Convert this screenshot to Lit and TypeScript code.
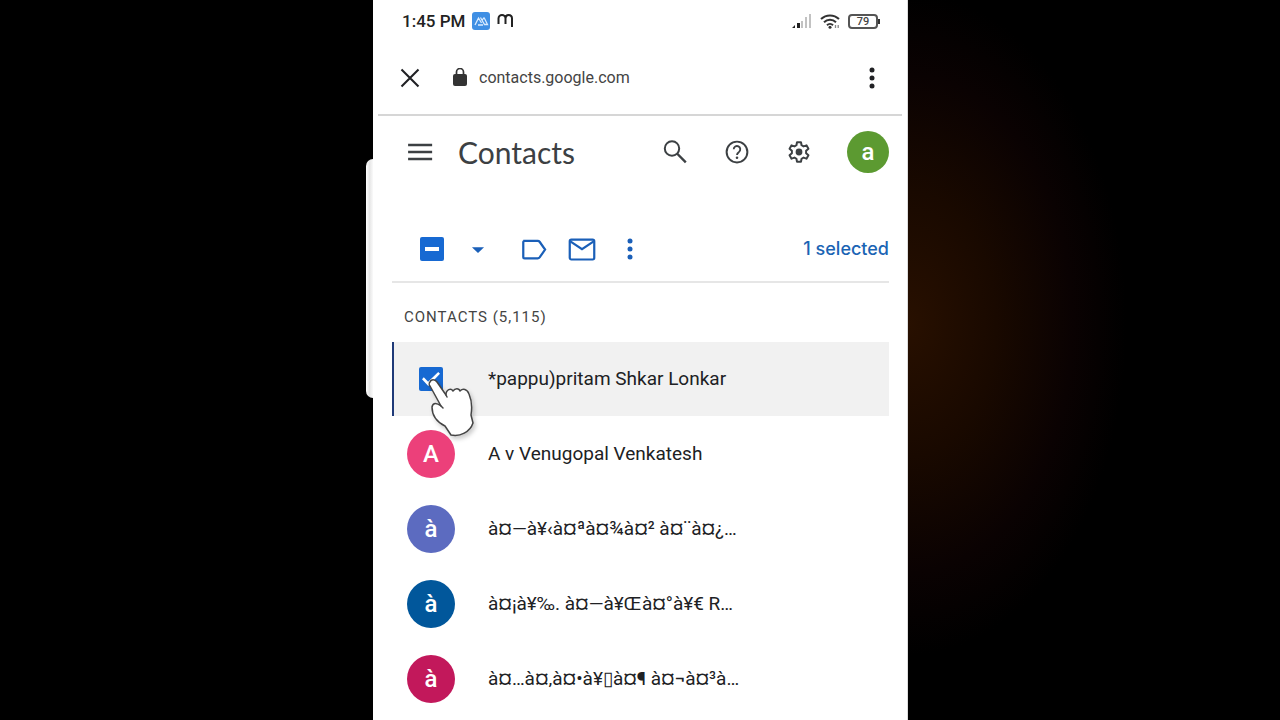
import { LitElement, html, css, svg } from 'lit';
import { customElement, property, state } from 'lit/decorators.js';

interface Contact {
    name: string;
    initial: string;
    tone: string;
    selected: boolean;
}

const CONTACTS: Contact[] = [
    { name: '*pappu)pritam Shkar Lonkar', initial: 'p', tone: 'green', selected: true },
    { name: 'A v Venugopal Venkatesh', initial: 'A', tone: 'pink', selected: false },
    { name: 'à¤—à¥‹à¤ªà¤¾à¤² à¤¨à¤¿…', initial: 'à', tone: 'indigo', selected: false },
    { name: 'à¤¡à¥‰. à¤—à¥Œà¤°à¥€ R…', initial: 'à', tone: 'blue', selected: false },
    { name: 'à¤…à¤‚à¤•à¥▯à¤¶ à¤¬à¤³à…', initial: 'à', tone: 'magenta', selected: false },
];

// 24x24 icons, painted with currentColor
const ICONS = {
    close: svg`<path d="M3.5 3.5l17 17M20.5 3.5l-17 17" fill="none" stroke="currentColor" stroke-width="2.1"/>`,
    menu: svg`<path d="M1.800 6h20.600M1.800 12h20.600M1.800 18h20.600" fill="none" stroke="currentColor" stroke-width="2.200"/>`,
    more: svg`<circle cx="12" cy="4" r="2.500"/><circle cx="12" cy="12" r="2.500"/><circle cx="12" cy="20" r="2.500"/>`,
    search: svg`<circle cx="9" cy="8.500" r="7.200" fill="none" stroke="currentColor" stroke-width="2"/><path d="M14 13.500l8.800 8.800" fill="none" stroke="currentColor" stroke-width="2.400"/>`,
    help: svg`<circle cx="12" cy="12" r="8.900" fill="none" stroke="currentColor" stroke-width="1.700"/><path d="M9.200 9.700a2.800 2.800 0 1 1 4.500 2.200c-1.100.8-1.700 1.300-1.700 2.600" fill="none" stroke="currentColor" stroke-width="1.600"/><circle cx="12" cy="17" r="1.100"/>`,
    gear: svg`<path d="M10.300 2.800h3.400l.5 2.600 1.700 1 2.500-.9 1.700 2.900-2 1.800v2l2 1.800-1.700 2.900-2.500-.9-1.700 1-.5 2.600h-3.400l-.5-2.600-1.700-1-2.500.9-1.700-2.900 2-1.800v-2l-2-1.800 1.700-2.900 2.500.9 1.700-1z" transform="translate(0 .8)" fill="none" stroke="currentColor" stroke-width="1.700" stroke-linejoin="round"/><circle cx="12" cy="12" r="2.900"/>`,
    arrow: svg`<path d="M6.800 10.500h10.400l-5.200 5z"/>`,
    label: svg`<path d="M2.800 5h12.400a2 2 0 0 1 1.600.8l4.700 6.700-4.700 6.700a2 2 0 0 1-1.600.8H4a1.200 1.200 0 0 1-1.200-1.200V6.200A1.200 1.200 0 0 1 4 5z" fill="none" stroke="currentColor" stroke-width="1.900"/>`,
    mail: svg`<rect x="1.500" y="4" width="21" height="17" rx="1.400" fill="none" stroke="currentColor" stroke-width="1.900"/><path d="M2 5.400l10 6.800 10-6.800" fill="none" stroke="currentColor" stroke-width="1.900"/>`,
};

type IconName = keyof typeof ICONS;

@customElement('icon-button')
export class IconButton extends LitElement {
    static styles = css`
    :host {
      display: block;
    }

    button {
      display: grid;
      place-items: center;
      width: 28px;
      height: 28px;
      padding: 0;
      border: 0;
      background: none;
      color: inherit;
      cursor: pointer;
    }

    svg {
      display: block;
      width: 28px;
      height: 28px;
      fill: currentColor;
    }

    .small svg {
      width: 24px;
      height: 24px;
    }
  `;

    @property() icon: IconName = 'more';
    @property() name = '';
    @property() size = '';

    render() {
        return html`
      <button class=${this.size} type="button" aria-label=${this.name}>
        <svg viewBox="0 0 24 24" aria-hidden="true">${ICONS[this.icon]}</svg>
      </button>
    `;
    }
}

@customElement('status-bar')
export class StatusBar extends LitElement {
    static styles = css`
    :host {
      display: flex;
      align-items: center;
      gap: 7px;
      height: 42px;
      padding: 0 27px 0 29px;
      color: #222;
    }

    .time {
      font-size: 17px;
      font-weight: 500;
      line-height: 20px;
    }

    .tray {
      display: flex;
      align-items: center;
      gap: 8px;
      margin-left: auto;
    }

    .power {
      display: flex;
      align-items: center;
    }

    .battery {
      box-sizing: border-box;
      width: 30px;
      height: 15px;
      border: 2px solid #555;
      border-radius: 4px;
      color: #444;
      font-size: 11px;
      font-weight: 500;
      line-height: 11px;
      text-align: center;
    }

    .tip {
      width: 2px;
      height: 5px;
      background: #333;
    }

    svg {
      display: block;
    }
  `;

    render() {
        return html`
      <span class="time">1:45 PM</span>
      <svg width="18" height="18" viewBox="0 0 18 18" aria-hidden="true">
        <rect width="18" height="18" rx="3" fill="#3f8fe4"/>
        <path d="M3 13l3.500-7 3 5M6 13h5M8.500 5.500l4 7h3l-3.500-7M12 5.500l-2 3" fill="none" stroke="#d9ebff" stroke-width="1.300"/>
      </svg>
      <svg width="17" height="18" viewBox="0 0 17 18" aria-hidden="true">
        <path d="M1.500 12V6.500a3.500 3.500 0 0 1 7 0V12M8.500 6.500C8.500 4 9.800 3 11.500 3S15 4 15 6.500V15" fill="none" stroke="#222" stroke-width="2"/>
      </svg>
      <span class="tray">
        <svg width="20" height="15" viewBox="0 0 20 15" aria-hidden="true">
          <path d="M0 14l3-3v3zM5 9h3v5H5z" fill="#222"/>
          <path d="M9 7h2v7H9zM13 3h2v11h-2zM17 0h2v14h-2z" fill="#c2c2c2"/>
        </svg>
        <svg width="20" height="16" viewBox="0 0 20 16" aria-hidden="true">
          <path d="M1 6a13 13 0 0 1 18 0M4 9.200a8.600 8.600 0 0 1 12 0M7 12.200a4.300 4.300 0 0 1 6 0" fill="none" stroke="#333" stroke-width="2"/>
          <circle cx="10" cy="14.200" r="1.500" fill="#333"/>
          <path d="M15.500 12v3M18.200 12v3" stroke="#888" stroke-width="1.300"/>
        </svg>
        <span class="power">
          <span class="battery">79</span>
          <span class="tip"></span>
        </span>
      </span>
    `;
    }
}

@customElement('app-root')
export class AppRoot extends LitElement {
    static styles = css`
    :host {
      display: block;
      font-family: Roboto, 'Noto Sans', sans-serif;
      color: #202124;
    }

    * {
      box-sizing: border-box;
    }

    .stage {
      display: flex;
      justify-content: center;
      height: 100vh;
      padding-left: 1px;
      overflow: hidden;
      background: radial-gradient(17% 46% at 71% 45%, #281000, #190900 40%, #0a0202 75%, #000) #000;
    }

    .phone {
      position: relative;
      width: 100%;
      max-width: 535px;
      height: 100%;
      border-right: 1px solid #ddd;
      background: #fff;
    }

    /* edge panel handle sticking out of the phone */
    .handle {
      position: absolute;
      top: 159px;
      left: -7px;
      width: 7px;
      height: 239px;
      border-radius: 7px 0 0 7px;
      background: linear-gradient(90deg, #fff, #e6e6e6 50%, #fafafa);
    }

    .address {
      display: flex;
      align-items: center;
      height: 74px;
      margin: 0 5px;
      padding: 0 16px 0 18px;
      border-bottom: 2px solid #d6d6d6;
    }

    .lock {
      margin: 0 11px 0 28px;
    }

    .url {
      flex: 1;
      font-size: 16px;
      line-height: 20px;
      color: #444;
    }

    .content {
      padding: 0 18px 0 19px;
    }

    .header {
      display: flex;
      align-items: center;
      gap: 34px;
      height: 72px;
      padding-left: 14px;
      color: #3c4043;
    }

    .brand {
      display: flex;
      flex: 1;
      align-items: center;
      gap: 24px;
    }

    h1 {
      margin: 0;
      font-family: Lato, sans-serif;
      font-size: 30px;
      font-weight: 400;
      line-height: 36px;
    }

    .account {
      width: 42px;
      height: 42px;
      padding: 0;
      border: 0;
      border-radius: 50%;
      background: #5c9a31;
      color: #fff;
      font-family: inherit;
      font-size: 24px;
      font-weight: 500;
      line-height: 42px;
    }

    .toolbar {
      display: flex;
      align-items: center;
      gap: 20px;
      height: 67px;
      margin-top: 28px;
      padding-left: 28px;
      border-bottom: 2px solid #e6e6e6;
      color: #1a5fb8;
    }

    .dropdown {
      margin-right: 8px;
    }

    .count {
      margin-left: auto;
      font-family: Inter, sans-serif;
      font-size: 18px;
      font-weight: 500;
      line-height: 24px;
      color: #1b64b4;
    }

    input {
      display: grid;
      place-items: center;
      appearance: none;
      width: 24px;
      height: 24px;
      margin: 0;
      border-radius: 2px;
      background: #1769d2;
    }

    input::before {
      content: '';
      width: 18px;
      height: 14px;
      background: #fff;
      clip-path: polygon(0 52%, 10% 38%, 34% 70%, 90% 0, 100% 12%, 35% 100%);
    }

    input:indeterminate::before {
      width: 14px;
      height: 4px;
      clip-path: none;
    }

    h2 {
      margin: 0;
      padding: 25px 12px 16px;
      font-size: 15px;
      font-weight: 400;
      letter-spacing: 1px;
      line-height: 18px;
      color: #444;
    }

    ul {
      display: grid;
      gap: 1px;
      margin: 0;
      padding: 0;
      list-style: none;
    }

    li {
      position: relative;
      display: flex;
      align-items: center;
      gap: 33px;
      height: 74px;
      padding-left: 15px;
    }

    .selected {
      background: #f1f1f1;
      box-shadow: inset 2px 0 #1f3a78;
    }

    .avatar {
      display: grid;
      place-items: center;
      width: 48px;
      height: 48px;
      border-radius: 50%;
      color: #fff;
      font-size: 24px;
      font-weight: 500;
      line-height: 30px;
    }

    .pink {
      background: #ec407a;
    }

    .indigo {
      background: #5c6bc0;
    }

    .blue {
      background: #01579b;
    }

    .magenta {
      background: #c2185b;
    }

    .name {
      font-size: 19px;
      line-height: 24px;
    }

    .pointer {
      position: absolute;
      top: 35px;
      left: 34px;
      filter: drop-shadow(2px 3px 2px rgba(0, 0, 0, 0.2));
    }
  `;

    @state() private contacts = CONTACTS;

    private toggle(index: number) {
        this.contacts = this.contacts.map((c, i) => (i === index ? { ...c, selected: !c.selected } : c));
    }

    private renderPointer() {
        return html`
      <svg class="pointer" width="50" height="62" viewBox="0 0 50 62" aria-hidden="true">
        <path
          d="M4 5C5 2 9 2 11 5L20 18C20 12 25 11 27 14C29 11 33 11 34 14C37 11 41 12 43 17C46 24 46 32 45 38L47 46C44 55 34 60 25 58L19 49C11 45 6 39 6 30C7 25 11 26 15 29L4 9C3 8 3 6 4 5Z"
          fill="#fff" stroke="#444" stroke-width="1.500" stroke-linejoin="round"/>
        <path d="M15 29l2 2M20 18l1 2" fill="none" stroke="#444" stroke-width="1.500" stroke-linecap="round"/>
      </svg>
    `;
    }

    private renderContact(contact: Contact, index: number) {
        return html`
      <li class=${contact.selected ? 'selected' : ''}>
        ${contact.selected
            ? html`
              <label class="avatar" for="pick-${index}">
                <input id="pick-${index}" type="checkbox" aria-label=${contact.name} checked
                  @change=${() => this.toggle(index)}>
              </label>`
            : html`<span class="avatar ${contact.tone}">${contact.initial}</span>`}
        <span class="name">${contact.name}</span>
        ${index === 0 ? this.renderPointer() : ''}
      </li>
    `;
    }

    render() {
        const count = this.contacts.filter((c) => c.selected).length;
        return html`
      <div class="stage">
        <main class="phone">
          <div class="handle"></div>
          <status-bar></status-bar>
          <div class="address">
            <icon-button icon="close" name="Close" size="small"></icon-button>
            <svg class="lock" width="16" height="20" viewBox="0 0 16 20" aria-hidden="true">
              <rect x="1" y="6" width="14" height="12" rx="2" fill="#333"/>
              <path d="M4.500 7V4a3.500 3.500 0 0 1 7 0v3" fill="none" stroke="#333" stroke-width="1.700"/>
            </svg>
            <span class="url">contacts.google.com</span>
            <icon-button icon="more" name="Browser menu" size="small"></icon-button>
          </div>
          <div class="content">
            <header class="header">
              <div class="brand">
                <icon-button icon="menu" name="Main menu"></icon-button>
                <h1>Contacts</h1>
              </div>
              <icon-button icon="search" name="Search" size="small"></icon-button>
              <icon-button icon="help" name="Help"></icon-button>
              <icon-button icon="gear" name="Settings"></icon-button>
              <button class="account" type="button">a</button>
            </header>
            <div class="toolbar">
              <input type="checkbox" aria-label="Select all" .indeterminate=${true}>
              <icon-button class="dropdown" icon="arrow" name="Selection options"></icon-button>
              <icon-button icon="label" name="Manage labels"></icon-button>
              <icon-button icon="mail" name="Send email"></icon-button>
              <icon-button icon="more" name="More actions" size="small"></icon-button>
              <span class="count">${count} selected</span>
            </div>
            <h2>CONTACTS (5,115)</h2>
            <ul>
              ${this.contacts.map((contact, index) => this.renderContact(contact, index))}
            </ul>
          </div>
        </main>
      </div>
    `;
    }
}
